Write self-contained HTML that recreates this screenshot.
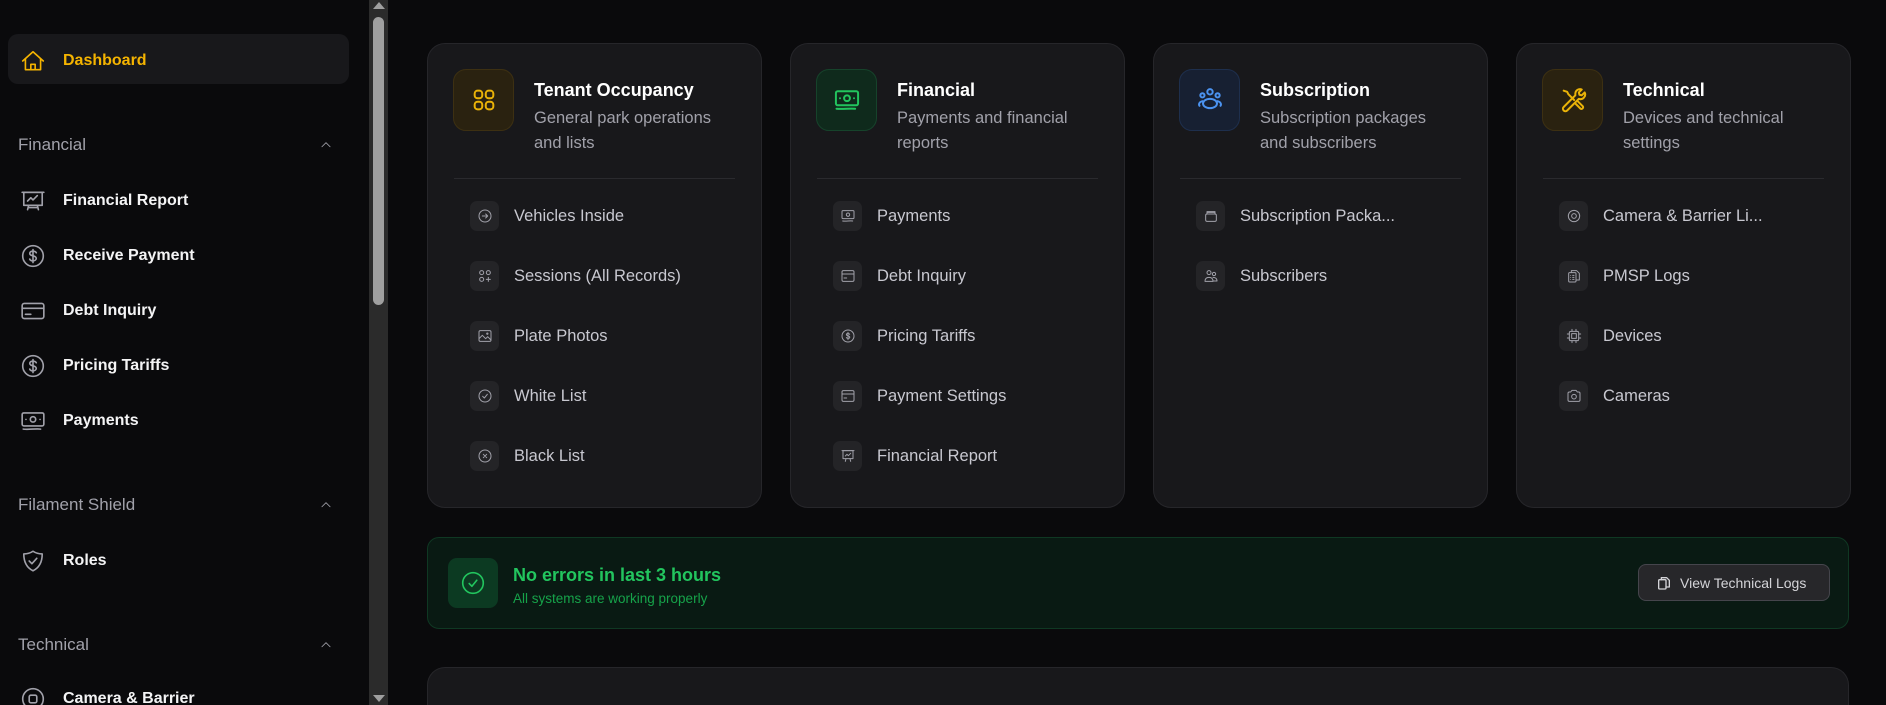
<!DOCTYPE html>
<html style="width:1886px;height:705px;overflow:hidden"><head><meta charset="utf-8"><style>
*{margin:0;padding:0;box-sizing:border-box}
body{width:1886px;height:705px;overflow:hidden;background:#0a0a0c;font-family:"Liberation Sans",sans-serif;position:relative}
.abs{position:absolute}
svg.ic{fill:none;stroke:currentColor;stroke-width:1.5;stroke-linecap:round;stroke-linejoin:round}
.nav{position:absolute;left:20px;height:30px;display:flex;align-items:center;color:#f4f4f5;font-weight:bold;font-size:16px}
.nav svg{width:26px;height:26px;color:#a1a1aa;margin-right:17px}
.sec{position:absolute;left:18px;color:#a1a1aa;font-size:17px;height:24px;line-height:24px;width:315px}
.sec svg{position:absolute;right:0;top:5px;width:14px;height:14px;color:#a1a1aa}
.card{position:absolute;top:43px;width:335px;height:465px;background:#18181b;border:1px solid #26262a;border-radius:18px}
.hb{position:absolute;left:25px;top:25px;width:61px;height:62px;border-radius:13px;display:flex;align-items:center;justify-content:center;border:1px solid}
.hb svg{width:28px;height:28px;stroke-width:1.7}
.ttl{position:absolute;left:106px;top:34px;color:#fff;font-weight:bold;font-size:18px;line-height:24px}
.sub{position:absolute;left:106px;top:62px;color:#a1a1aa;font-size:16.5px;line-height:25px}
.dv{position:absolute;left:26px;right:26px;top:134px;height:1px;background:#2a2a2e}
.it{position:absolute;left:42px;height:30px;display:flex;align-items:center;color:#c8c8d0;font-size:16.5px;white-space:nowrap}
.it .b{width:29px;height:30px;border-radius:7px;background:#242427;display:flex;align-items:center;justify-content:center;margin-right:15px}
.it svg{width:16px;height:16px;color:#a1a1aa}
</style></head><body>

<!-- sidebar -->
<div class="abs" style="left:8px;top:34px;width:341px;height:50px;background:#18181b;border-radius:10px"></div>
<div class="nav" style="top:46px;color:#f5b400"><svg class="ic" viewBox="0 0 24 24" style="color:#f5b400"><path d="M2.5 12 12 3.5l9.5 8.5"/><path d="M5 10v10h14V10"/><path d="M10 20v-5h4v5"/></svg>Dashboard</div>

<div class="sec" style="top:133px">Financial<svg class="ic" viewBox="0 0 24 24"><path d="M5 15l7-7 7 7"/></svg></div>
<div class="nav" style="top:186px"><svg class="ic" viewBox="0 0 24 24"><path d="M2 4h20"/><rect x="3.5" y="4" width="17" height="12"/><path d="M7 12l3-3 2 2 4-4"/><path d="M8 16l-1 4M16 16l1 4M7.5 18h9"/></svg>Financial Report</div>
<div class="nav" style="top:241px"><svg class="ic" viewBox="0 0 24 24"><circle cx="12" cy="12" r="9.5"/><path d="M15 9c-.5-1-1.6-1.5-3-1.5-1.7 0-3 .8-3 2.1 0 3 6 1.5 6 4.6 0 1.3-1.3 2.3-3 2.3-1.5 0-2.6-.6-3-1.6M12 6v12"/></svg>Receive Payment</div>
<div class="nav" style="top:296px"><svg class="ic" viewBox="0 0 24 24"><rect x="2" y="5" width="20" height="14" rx="2"/><path d="M2 9.5h20M5 15h5"/></svg>Debt Inquiry</div>
<div class="nav" style="top:351px"><svg class="ic" viewBox="0 0 24 24"><circle cx="12" cy="12" r="9.5"/><path d="M15 9c-.5-1-1.6-1.5-3-1.5-1.7 0-3 .8-3 2.1 0 3 6 1.5 6 4.6 0 1.3-1.3 2.3-3 2.3-1.5 0-2.6-.6-3-1.6M12 6v12"/></svg>Pricing Tariffs</div>
<div class="nav" style="top:406px"><svg class="ic" viewBox="0 0 24 24"><rect x="2" y="4.5" width="20" height="12" rx="1.5"/><circle cx="12" cy="10.5" r="2.5"/><path d="M5.5 10.5h.01M18.5 10.5h.01M3 19.5c5 .5 12-.5 16 0"/></svg>Payments</div>

<div class="sec" style="top:493px">Filament Shield<svg class="ic" viewBox="0 0 24 24"><path d="M5 15l7-7 7 7"/></svg></div>
<div class="nav" style="top:546px"><svg class="ic" viewBox="0 0 24 24"><path d="M12 3c3 2 6 2.5 8.5 2.5C20.5 14 17 18.5 12 21 7 18.5 3.5 14 3.5 5.5 6 5.5 9 5 12 3z"/><path d="M8.5 12l2.5 2.5 4.5-5"/></svg>Roles</div>

<div class="sec" style="top:633px">Technical<svg class="ic" viewBox="0 0 24 24"><path d="M5 15l7-7 7 7"/></svg></div>
<div class="nav" style="top:684px"><svg class="ic" viewBox="0 0 24 24"><circle cx="12" cy="12" r="9.5"/><rect x="8.5" y="8.5" width="7" height="7" rx="1.5"/></svg>Camera &amp; Barrier</div>

<!-- scrollbar -->
<div class="abs" style="left:369px;top:0;width:19px;height:705px;background:#2b2b2b"></div>
<div class="abs" style="left:373px;top:17px;width:11px;height:288px;background:#9f9f9f;border-radius:6px"></div>
<div class="abs" style="left:373px;top:2px;width:0;height:0;border-left:6px solid transparent;border-right:6px solid transparent;border-bottom:7px solid #9f9f9f"></div>
<div class="abs" style="left:373px;top:695px;width:0;height:0;border-left:6px solid transparent;border-right:6px solid transparent;border-top:7px solid #9f9f9f"></div>

<!-- card 1 -->
<div class="card" style="left:427px">
 <div class="hb" style="background:#2a2210;border-color:#3d3012"><svg class="ic" viewBox="0 0 24 24" style="color:#eab308"><rect x="4" y="4" width="6.5" height="6.5" rx="2.5"/><rect x="13.5" y="4" width="6.5" height="6.5" rx="2.5"/><rect x="4" y="13.5" width="6.5" height="6.5" rx="2.5"/><rect x="13.5" y="13.5" width="6.5" height="6.5" rx="2.5"/></svg></div>
 <div class="ttl">Tenant Occupancy</div>
 <div class="sub">General park operations<br>and lists</div>
 <div class="dv"></div>
 <div class="it" style="top:157px"><div class="b"><svg class="ic" viewBox="0 0 24 24"><circle cx="12" cy="12" r="9"/><path d="M8 12h8M13 9l3 3-3 3"/></svg></div>Vehicles Inside</div>
 <div class="it" style="top:217px"><div class="b"><svg class="ic" viewBox="0 0 24 24"><rect x="4" y="4" width="6" height="6" rx="3"/><rect x="14" y="4" width="6" height="6" rx="3"/><rect x="4" y="14" width="6" height="6" rx="3"/><path d="M17 14v6M14 17h6"/></svg></div>Sessions (All Records)</div>
 <div class="it" style="top:277px"><div class="b"><svg class="ic" viewBox="0 0 24 24"><rect x="3" y="4" width="18" height="16" rx="2"/><path d="M3 16l5-5 5 5 3-3 5 5"/><circle cx="15.5" cy="8.5" r="1"/></svg></div>Plate Photos</div>
 <div class="it" style="top:337px"><div class="b"><svg class="ic" viewBox="0 0 24 24"><circle cx="12" cy="12" r="9"/><path d="M8.5 12.5l2.5 2.5 4.5-5.5"/></svg></div>White List</div>
 <div class="it" style="top:397px"><div class="b"><svg class="ic" viewBox="0 0 24 24"><circle cx="12" cy="12" r="9"/><path d="M9.5 9.5l5 5M14.5 9.5l-5 5"/></svg></div>Black List</div>
</div>

<!-- card 2 -->
<div class="card" style="left:790px">
 <div class="hb" style="background:#0f2a1c;border-color:#16432b"><svg class="ic" viewBox="0 0 24 24" style="color:#22c55e"><rect x="2.5" y="4.5" width="19" height="12" rx="1.5"/><circle cx="12" cy="10.5" r="2.5"/><path d="M6 10.5h.01M18 10.5h.01M3 19.5c5 .5 12-.5 16 0"/></svg></div>
 <div class="ttl">Financial</div>
 <div class="sub">Payments and financial<br>reports</div>
 <div class="dv"></div>
 <div class="it" style="top:157px"><div class="b"><svg class="ic" viewBox="0 0 24 24"><rect x="3" y="4" width="18" height="12" rx="1.5"/><circle cx="12" cy="10" r="2.5"/><path d="M4 19.5c5 .5 11-.5 15 0"/></svg></div>Payments</div>
 <div class="it" style="top:217px"><div class="b"><svg class="ic" viewBox="0 0 24 24"><rect x="3" y="4" width="18" height="16" rx="2"/><path d="M3 9h18M6 15h4"/></svg></div>Debt Inquiry</div>
 <div class="it" style="top:277px"><div class="b"><svg class="ic" viewBox="0 0 24 24"><circle cx="12" cy="12" r="9"/><path d="M14.5 9.5c-.4-.8-1.3-1.3-2.5-1.3-1.4 0-2.4.7-2.4 1.7 0 2.5 5 1.2 5 3.8 0 1.1-1.1 1.9-2.5 1.9-1.2 0-2.2-.5-2.5-1.3M12 6.5v11"/></svg></div>Pricing Tariffs</div>
 <div class="it" style="top:337px"><div class="b"><svg class="ic" viewBox="0 0 24 24"><rect x="3" y="4" width="18" height="16" rx="2"/><path d="M3 9h18M6 15h4"/></svg></div>Payment Settings</div>
 <div class="it" style="top:397px"><div class="b"><svg class="ic" viewBox="0 0 24 24"><path d="M3 4h18"/><rect x="4.5" y="4" width="15" height="12"/><path d="M8 12l2.5-2.5 2 2 3.5-3.5M9 16l-1 4M15 16l1 4"/></svg></div>Financial Report</div>
</div>

<!-- card 3 -->
<div class="card" style="left:1153px">
 <div class="hb" style="background:#172032;border-color:#1e2f4d"><svg class="ic" viewBox="0 0 24 24" style="color:#4b93f0"><circle cx="12" cy="5" r="2.3"/><circle cx="5.5" cy="8" r="1.8"/><circle cx="18.5" cy="8" r="1.8"/><ellipse cx="12" cy="15" rx="6" ry="4"/><path d="M3 17c-1-1.5 0-3.5 2.5-4M21 17c1-1.5 0-3.5-2.5-4"/></svg></div>
 <div class="ttl">Subscription</div>
 <div class="sub">Subscription packages<br>and subscribers</div>
 <div class="dv"></div>
 <div class="it" style="top:157px"><div class="b"><svg class="ic" viewBox="0 0 24 24"><rect x="4" y="9" width="16" height="11" rx="2"/><path d="M6 9V5.5h12V9M7 6.5h10"/></svg></div>Subscription Packa...</div>
 <div class="it" style="top:217px"><div class="b"><svg class="ic" viewBox="0 0 24 24"><circle cx="9" cy="7" r="3"/><circle cx="16.5" cy="9" r="2.5"/><path d="M3 20c0-4 2.5-6 6-6s6 2 6 6zM15 14c3 0 6 1.5 6 5.5h-5"/></svg></div>Subscribers</div>
</div>

<!-- card 4 -->
<div class="card" style="left:1516px">
 <div class="hb" style="background:#2a2210;border-color:#3d3012"><svg class="ic" viewBox="0 0 24 24" style="color:#eab308"><path d="M14 6.5a4 4 0 0 1 5.5-3.5l-2.5 2.5.5 2 2 .5 2.5-2.5A4 4 0 0 1 17 11L7 21a2 2 0 0 1-3-3L14 8z"/><path d="M4 4l3 1 1 2 5 5M14 15l4.5 4.5a1.5 1.5 0 0 0 2-2L16 13"/></svg></div>
 <div class="ttl">Technical</div>
 <div class="sub">Devices and technical<br>settings</div>
 <div class="dv"></div>
 <div class="it" style="top:157px"><div class="b"><svg class="ic" viewBox="0 0 24 24"><circle cx="12" cy="12" r="8.5"/><circle cx="12" cy="12" r="3.5"/></svg></div>Camera &amp; Barrier Li...</div>
 <div class="it" style="top:217px"><div class="b"><svg class="ic" viewBox="0 0 24 24"><rect x="4" y="7" width="11" height="14" rx="1.5"/><path d="M8 7V4h8l4 4v10h-5M7 11h.01M7 14h.01M7 17h.01M10 11h2M10 14h2M10 17h2"/></svg></div>PMSP Logs</div>
 <div class="it" style="top:277px"><div class="b"><svg class="ic" viewBox="0 0 24 24"><rect x="5" y="5" width="14" height="14" rx="2"/><rect x="8.5" y="8.5" width="7" height="7"/><path d="M9 2v3M15 2v3M9 19v3M15 19v3M2 9h3M2 15h3M19 9h3M19 15h3"/></svg></div>Devices</div>
 <div class="it" style="top:337px"><div class="b"><svg class="ic" viewBox="0 0 24 24"><path d="M3 8a2 2 0 0 1 2-2h2l2-2.5h6L17 6h2a2 2 0 0 1 2 2v10a2 2 0 0 1-2 2H5a2 2 0 0 1-2-2z"/><circle cx="12" cy="13" r="3.5"/></svg></div>Cameras</div>
</div>

<!-- status banner -->
<div class="abs" style="left:427px;top:537px;width:1422px;height:92px;background:#091a13;border:1px solid #0f3823;border-radius:12px"></div>
<div class="abs" style="left:448px;top:558px;width:50px;height:50px;background:#0c3a22;border-radius:9px;display:flex;align-items:center;justify-content:center"><svg class="ic" viewBox="0 0 24 24" style="width:26px;height:26px;color:#22c55e"><circle cx="12" cy="12" r="9.5"/><path d="M8.5 12.5l2.5 2.5 4.5-5.5"/></svg></div>
<div class="abs" style="left:513px;top:563px;color:#22c55e;font-weight:bold;font-size:18px;line-height:24px">No errors in last 3 hours</div>
<div class="abs" style="left:513px;top:590px;color:#16a34a;font-size:13.5px;line-height:18px">All systems are working properly</div>
<div class="abs" style="left:1638px;top:564px;width:192px;height:37px;background:#27272a;border:1px solid #45454c;border-radius:8px;display:flex;align-items:center;padding-left:17px;color:#d4d4d8;font-size:14px"><svg class="ic" viewBox="0 0 24 24" style="width:16px;height:16px;color:#d4d4d8;margin-right:8px;stroke-width:2"><rect x="4" y="7" width="11" height="14" rx="1.5"/><path d="M8 7V4h8l4 4v10h-5"/></svg>View Technical Logs</div>

<!-- bottom card (clipped) -->
<div class="abs" style="left:427px;top:667px;width:1422px;height:38px;background:#18181b;border:1px solid #26262a;border-bottom:none;border-radius:18px 18px 0 0"></div>
</body></html>
